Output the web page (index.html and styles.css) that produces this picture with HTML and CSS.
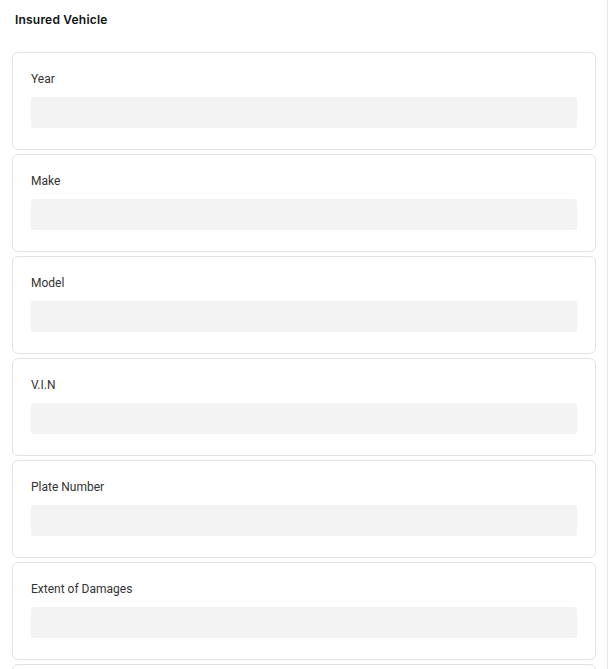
FILE: index.html
```html
<!DOCTYPE html>
<html lang="en">
<head>
    <meta charset="UTF-8">
    <meta name="viewport" content="width=device-width, initial-scale=1.0">
    <title>Insured Vehicle</title>
    <link rel="stylesheet" href="styles.css">
</head>
<body>

    <h2 class="section-title">Insured Vehicle</h2>

    <!-- vehicle fields -->
    <div class="fields">
        <div class="field">
            <label for="year">Year</label>
            <input type="text" id="year">
        </div>
        <div class="field">
            <label for="make">Make</label>
            <input type="text" id="make">
        </div>
        <div class="field">
            <label for="model">Model</label>
            <input type="text" id="model">
        </div>
        <div class="field">
            <label for="vin">V.I.N</label>
            <input type="text" id="vin">
        </div>
        <div class="field">
            <label for="plate">Plate Number</label>
            <input type="text" id="plate">
        </div>
        <div class="field">
            <label for="damages">Extent of Damages</label>
            <input type="text" id="damages">
        </div>
        <!-- next card, only its top edge fits on screen -->
        <div class="field field-peek"></div>
    </div>

</body>
</html>
```

FILE: styles.css
```css
html, body { height: 669px; overflow: hidden; }
html { box-shadow: inset -1px 0 #e8e8e8; }
body { margin: 0; padding: 0 12px; font-family: Roboto, "Liberation Sans", sans-serif; color: #333; width: 608px; box-sizing: border-box; }
.section-title { margin: 0; padding: 12px 3px 0; height: 52px; box-sizing: border-box; font-family: Inter, "Liberation Sans", sans-serif; font-size: 12px; font-weight: 600; line-height: 16px; letter-spacing: 0.2px; color: #111; }
.fields { display: flex; flex-direction: column; gap: 4px; }
.field { display: flex; flex-direction: column; background: #fff; border: 1px solid #e2e2e2; border-radius: 6px; padding: 18px 18px 21px; }
.field label { font-size: 12px; line-height: 16px; color: #333; margin-bottom: 10px; }
.field input { height: 31px; border: none; border-radius: 2px; background: #f3f3f3; padding: 0 10px; font-size: 12px; outline: none; }
.field-peek { height: 56px; }
```
